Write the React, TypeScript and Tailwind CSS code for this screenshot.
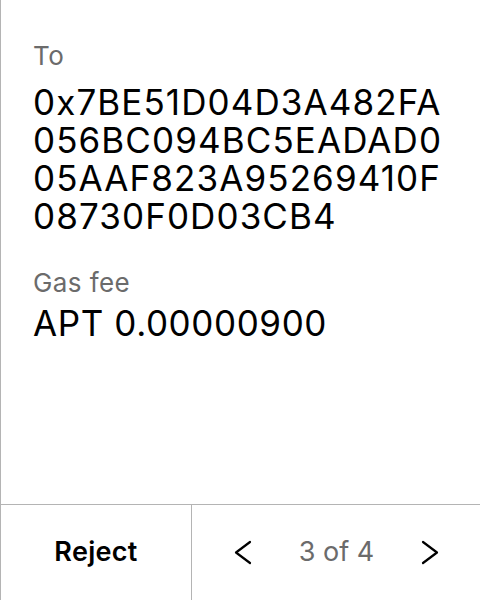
const addressLines = [
  "0x7BE51D04D3A482FA",
  "056BC094BC5EADAD0",
  "05AAF823A95269410F",
  "08730F0D03CB4",
];

function Chevron({ dir }: { dir: "left" | "right" }) {
  return (
    <svg width="18" height="25" viewBox="0 0 18 25" fill="none" stroke="black" strokeWidth="2.2" strokeLinecap="round" strokeLinejoin="round">
      {dir === "left" ? <polyline points="16,2 2,12.5 16,23" /> : <polyline points="2,2 16,12.5 2,23" />}
    </svg>
  );
}

export default function App() {
  return (
    <div className="flex h-[600px] w-[480px] flex-col border-l border-[#b4b4b4] bg-white font-['Inter',sans-serif] text-black">
      <div className="flex flex-1 flex-col pl-[32px] pt-[41px]">
        <div className="text-[26px] leading-[29px] tracking-[0.4px] text-[#6b6b6b]">To</div>
        <div className="mt-[13px] text-[35px] leading-[38px] tracking-[1.1px]">
          {addressLines.map((line) => (
            <div key={line}>{line}</div>
          ))}
        </div>
        <div className="mt-[33px] text-[26px] leading-[29px] tracking-[0.4px] text-[#6b6b6b]">Gas fee</div>
        <div className="mt-[7px] text-[35px] leading-[38px] tracking-[0.6px]">APT 0.00000900</div>
      </div>
      <div className="flex h-[96px] border-t border-[#b4b4b4]">
        <button className="flex w-[191px] items-center justify-center border-r border-[#b4b4b4] text-[27px] font-semibold tracking-[0.3px]">
          Reject
        </button>
        <div className="flex flex-1 items-center justify-between pl-[42px] pr-[41px]">
          <Chevron dir="left" />
          <span className="text-[27px] text-[#6b6b6b]">3 of 4</span>
          <Chevron dir="right" />
        </div>
      </div>
    </div>
  );
}
